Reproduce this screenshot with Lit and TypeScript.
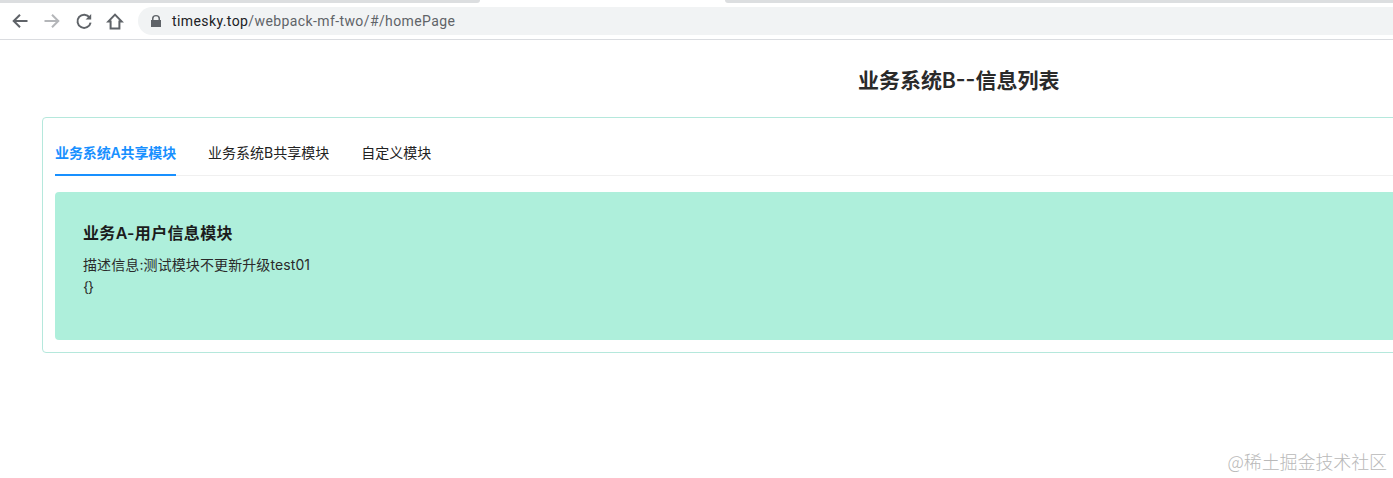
import { LitElement, html, css } from "lit";
import { customElement } from "lit/decorators.js";

@customElement("app-root")
export class AppRoot extends LitElement {
  static styles = css`
    :host { display: block; width: 1393px; height: 478px; overflow: hidden; position: relative; background: #fff; font-family: "Inter", "Noto Sans CJK SC", sans-serif; color: #222; }
    .tabstrip { height: 7px; display: flex; background: #fff; }
    .tabstrip .g1 { width: 480px; height: 3px; background: #dcdee0; border-radius: 0 0 4px 0; }
    .tabstrip .w { width: 245px; }
    .tabstrip .g2 { flex: 1; height: 3px; background: #dcdee0; border-radius: 0 0 0 4px; }
    .toolbar { height: 32px; display: flex; align-items: flex-start; border-bottom: 1px solid #dadce0; background: #fff; box-sizing: content-box; }
    .icons { display: flex; width: 138px; height: 28px; padding-left: 11px; box-sizing: border-box; align-items: center; }
    .icons svg { display: block; flex: none; width: 18px; height: 18px; }
    .i2 { margin-left: 14px; }
    .i3 { margin-left: 14px; }
    .i4 { margin-left: 13px; }
    .omni { flex: 1; height: 28px; background: #f1f3f4; border-radius: 14px 0 0 14px; display: flex; align-items: center; padding-left: 13px; font: 14px "Roboto", "Inter", sans-serif; color: #5f6368; letter-spacing: 0.4px; }
    .lock { width: 10px; height: 12px; margin-right: 11px; flex: none; }
    .omni b { font-weight: 400; color: #202124; }
    h1 { margin: 0; font-size: 21px; line-height: 28px; font-weight: 600; color: #2a2a2a; padding: 27px 0 0 858px; white-space: nowrap; height: 50px; }
    .card { margin-left: 42px; width: 1400px; height: 236px; box-sizing: border-box; border: 1px solid #b5e8dc; border-radius: 4px; padding: 12px; background: #fff; }
    .tabs { display: flex; gap: 32px; height: 45px; border-bottom: 1px solid #f0f0f0; }
    .tab { font-size: 14px; line-height: 22px; padding-top: 12px; height: 45px; box-sizing: border-box; color: #222; white-space: nowrap; }
    .tab.on { color: #1890ff; font-weight: 600; border-bottom: 2px solid #1890ff; height: 46px; letter-spacing: -0.12px; }
    .panel { margin-top: 16px; height: 148px; background: #aeefdb; border-radius: 4px; padding: 29px 28px 0; box-sizing: border-box; color: #2a2a2a; }
    h2 { margin: 0 0 9px; font-size: 16px; line-height: 24px; font-weight: 600; color: #1c1c1c; letter-spacing: 0.33px; }
    .panel p { margin: 0; font-size: 14px; line-height: 22px; letter-spacing: 0.1px; }
    .panel p.braces { letter-spacing: -1px; }
    .mark { position: absolute; right: 6px; top: 449px; font: 18px/24px "Noto Sans CJK SC", sans-serif; color: #b9b9b9; font-weight: 300; white-space: nowrap; letter-spacing: -0.1px; }
  `;

  render() {
    return html`
      <div class="tabstrip"><div class="g1"></div><div class="w"></div><div class="g2"></div></div>
      <div class="toolbar">
        <div class="icons">
          <svg viewBox="0 0 18 18" fill="none" stroke="#5f6368" stroke-width="2"><path d="M16.5 9H3M9 2.7 2.7 9 9 15.3"/></svg>
          <svg class="i2" viewBox="0 0 18 18" fill="none" stroke="#b4b6b9" stroke-width="2"><path d="M1.5 9H15M9 2.7 15.3 9 9 15.3"/></svg>
          <svg class="i3" viewBox="0 0 18 18" fill="none" stroke="#5f6368" stroke-width="2"><path d="M14.6 5.6A6.6 6.6 0 1 0 15.6 10.6"/><path d="M16.2 2V7.6H10.6Z" fill="#5f6368" stroke="none"/></svg>
          <svg class="i4" viewBox="0 0 18 18" fill="none" stroke="#5f6368" stroke-width="2"><path d="M9 2.6 2.4 9.4H4.6V16.4H13.4V9.4H15.6Z"/></svg>
        </div>
        <div class="omni">
          <svg class="lock" viewBox="0 0 10 12"><path fill="#5f6368" d="M1 5V3.6a4 3.6 0 0 1 8 0V5h1v7H0V5Zm1.5 0h5V3.6a2.5 2.4 0 0 0-5 0Z"/></svg>
          <span><b>timesky.top</b>/webpack-mf-two/#/homePage</span>
        </div>
      </div>
      <h1>业务系统B--信息列表</h1>
      <div class="card">
        <div class="tabs">
          <div class="tab on">业务系统A共享模块</div>
          <div class="tab">业务系统B共享模块</div>
          <div class="tab">自定义模块</div>
        </div>
        <div class="panel">
          <h2>业务A-用户信息模块</h2>
          <p>描述信息:测试模块不更新升级test01</p>
          <p class="braces">{}</p>
        </div>
      </div>
      <div class="mark">@稀土掘金技术社区</div>
    `;
  }
}
